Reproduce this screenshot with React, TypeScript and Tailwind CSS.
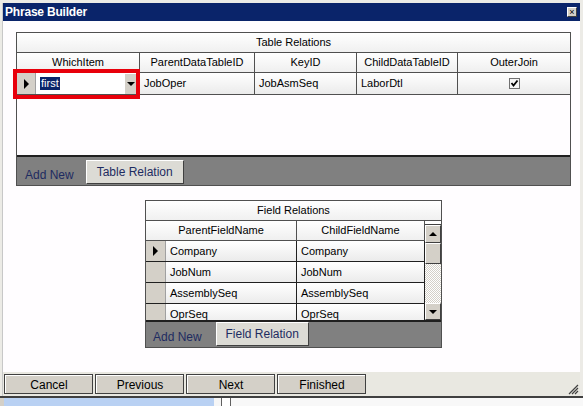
import React from "react";

const font = { fontFamily: '"Liberation Sans", Arial, sans-serif' };

function Tri({ dir = "right" }: { dir?: "right" | "up" | "down" }) {
  if (dir === "right")
    return <div className="w-0 h-0 border-y-[5px] border-y-transparent border-l-[5px] border-l-black" />;
  if (dir === "up")
    return <div className="w-0 h-0 border-x-[4px] border-x-transparent border-b-[4px] border-b-black" />;
  return <div className="w-0 h-0 border-x-[4px] border-x-transparent border-t-[4px] border-t-black" />;
}

function RaisedBtn({ children, className = "" }: { children: React.ReactNode; className?: string }) {
  return (
    <div className={"border border-t-white border-l-white border-b-[#404040] border-r-[#404040] bg-[#d4d0c8] flex items-center justify-center " + className}>
      {children}
    </div>
  );
}

const cellGrad = "bg-[linear-gradient(to_bottom,#ffffff,#ebebeb)]";

export default function App() {
  return (
    <div className="w-[583px] h-[406px] overflow-hidden bg-[#d4d0c8] relative text-[11px] text-black" style={font}>
      <div className="h-[3px] bg-[#ecebe6]" />
      <div className="flex">
        <div className="w-[3px] bg-[#ecebe6] border-r border-r-[#c8c8c8]" />
        <div className="flex-1 flex flex-col">
          {/* title bar */}
          <div className="h-[18px] bg-[#0a246a] flex items-center justify-between pl-[2px] pr-[3px]">
            <span className="text-white font-bold text-[12px] tracking-[-0.2px]">Phrase Builder</span>
            <div className="w-[10px] h-[10px] bg-[#d4d0c8] border border-t-white border-l-white border-b-[#404040] border-r-[#404040] flex items-center justify-center text-[9px] leading-none">×</div>
          </div>
          {/* body */}
          <div className="h-[351px] bg-[#fffdff] flex flex-col">
            {/* Table relations grid */}
            <div className="ml-[13px] mt-[11px] w-[555px] h-[154px] border border-[#505050] flex flex-col relative">
              <div className="h-[20px] border-b border-[#505050] flex items-center justify-center bg-[linear-gradient(to_bottom,#ffffff,#f0f0f0)]">Table Relations</div>
              <div className="h-[20px] border-b border-[#505050] flex bg-[linear-gradient(to_bottom,#ffffff,#efefef)]">
                <div className="w-[123px] border-r border-[#505050] flex items-center justify-center">WhichItem</div>
                <div className="w-[115px] border-r border-[#505050] flex items-center justify-center">ParentDataTableID</div>
                <div className="w-[102px] border-r border-[#505050] flex items-center justify-center">KeyID</div>
                <div className="w-[101px] border-r border-[#505050] flex items-center justify-center">ChildDataTableID</div>
                <div className="flex-1 flex items-center justify-center">OuterJoin</div>
              </div>
              <div className="h-[22px] border-b border-[#505050] flex">
                <div className="w-[19px] bg-[#d4d0c8] border-r border-[#a0a0a0] flex items-center justify-center">
                  <Tri />
                </div>
                <div className="w-[104px] border-r border-[#505050] flex items-center bg-white">
                  <div className="flex-1 h-full flex items-center pl-[4px]">
                    <span className="bg-[#0a246a] text-white px-[1px] leading-[13px]">first</span>
                  </div>
                  <div className="w-[11px] h-[20px] bg-[#d4d0c8] flex items-center justify-center mr-[3px]">
                    <Tri dir="down" />
                  </div>
                </div>
                <div className={"w-[115px] border-r border-[#505050] flex items-center pl-[4px] " + cellGrad}>JobOper</div>
                <div className={"w-[102px] border-r border-[#505050] flex items-center pl-[4px] " + cellGrad}>JobAsmSeq</div>
                <div className={"w-[101px] border-r border-[#505050] flex items-center pl-[4px] " + cellGrad}>LaborDtl</div>
                <div className={"flex-1 flex items-center justify-center " + cellGrad}>
                  <div className="w-[11px] h-[11px] border border-[#707070] bg-[#f4f4f4] flex items-center justify-center">
                    <svg width="9" height="9" viewBox="0 0 9 9">
                      <path d="M1.5 4 L3.5 6.5 L7.5 1.5" stroke="black" strokeWidth="1.8" fill="none" />
                    </svg>
                  </div>
                </div>
              </div>
              <div className="flex-1" />
              <div className="h-[30px] bg-[#808080] border-t-2 border-t-[#202020] flex items-end">
                <span className="ml-[8px] mb-[1px] text-[12px] text-[#1e2b61]">Add New</span>
                <RaisedBtn className="ml-[12px] mb-[1px] w-[98px] h-[24px] bg-[#dcdbd5] text-[12px] text-[#1e2b61]">Table Relation</RaisedBtn>
              </div>
              <div className="absolute left-[-4px] top-[36px] w-[127px] h-[30px] border-[4px] border-[#e8000b]" />
            </div>

            {/* Field relations grid */}
            <div className="ml-[142px] mt-[14px] w-[297px] h-[148px] border border-[#505050] flex flex-col">
              <div className="h-[20px] border-b border-[#505050] flex items-center justify-center bg-[linear-gradient(to_bottom,#ffffff,#f0f0f0)]">Field Relations</div>
              <div className="h-[99px] flex">
                <div className="w-[279px] flex flex-col overflow-hidden">
                  <div className="h-[20px] shrink-0 border-b border-[#505050] flex bg-[linear-gradient(to_bottom,#ffffff,#efefef)]">
                    <div className="w-[151px] border-r border-[#505050] flex items-center justify-center">ParentFieldName</div>
                    <div className="flex-1 border-r border-[#505050] flex items-center justify-center">ChildFieldName</div>
                  </div>
                  {["Company", "JobNum", "AssemblySeq", "OprSeq"].map((t, i) => (
                    <div key={t} className="h-[21px] shrink-0 border-b border-[#202020] flex">
                      <div className="w-[20px] bg-[#d4d0c8] border-r border-[#a0a0a0] flex items-center justify-center">
                        {i === 0 && <Tri />}
                      </div>
                      <div className={"w-[131px] border-r border-[#202020] flex items-center pl-[4px] " + cellGrad}>{t}</div>
                      <div className={"flex-1 border-r border-[#202020] flex items-center pl-[4px] " + cellGrad}>{t}</div>
                    </div>
                  ))}
                </div>
                <div className="flex-1 flex flex-col">
                  <div className="h-[4px] bg-white border-b border-[#404040]" />
                  <RaisedBtn className="h-[18px] shrink-0">
                    <Tri dir="up" />
                  </RaisedBtn>
                  <RaisedBtn className="h-[21px] shrink-0">{null}</RaisedBtn>
                  <div className="flex-1 bg-[repeating-conic-gradient(#d4d0c8_0%_25%,#ffffff_0%_50%)] bg-[length:2px_2px]" />
                  <RaisedBtn className="h-[17px] shrink-0">
                    <Tri dir="down" />
                  </RaisedBtn>
                </div>
              </div>
              <div className="flex-1 bg-[#808080] border-t-2 border-t-[#202020] flex items-end">
                <span className="ml-[7px] mb-[1px] text-[12px] text-[#1e2b61]">Add New</span>
                <RaisedBtn className="ml-[14px] mb-[1px] w-[93px] h-[24px] bg-[#dcdbd5] text-[12px] text-[#1e2b61]">Field Relation</RaisedBtn>
              </div>
            </div>
          </div>
          {/* bottom button strip */}
          <div className="h-[24px] bg-[#e9e8e1] flex items-center gap-[2px] pl-[1px] relative">
            {["Cancel", "Previous", "Next", "Finished"].map((t) => (
              <div key={t} className="w-[89px] h-[20px] border border-[#404040] bg-[#d4d0c8] flex">
                <div className="flex-1 border-t border-l border-t-white border-l-white flex items-center justify-center text-[12px]">{t}</div>
              </div>
            ))}
            <svg className="absolute right-[1px] bottom-[1px]" width="11" height="11" viewBox="0 0 11 11">
              <path d="M10 1 L1 10 M10 4 L4 10 M10 7 L7 10" stroke="#404040" strokeWidth="1.2" />
            </svg>
          </div>
        </div>
        <div className="w-[3px] bg-[#ecebe6]" />
      </div>
      <div className="h-[2px] bg-[#404040]" />
      <div className="flex h-[10px] bg-[#f6f6f6]">
        <div className="w-[4px] bg-[#d4d0c8]" />
        <div className="w-[210px] bg-[#b9d1f3]" />
        <div className="w-[7px]" />
        <div className="w-[10px] border-x border-[#606060] bg-white" />
        <div className="flex-1 bg-[#f8f8f8]" />
      </div>
    </div>
  );
}
